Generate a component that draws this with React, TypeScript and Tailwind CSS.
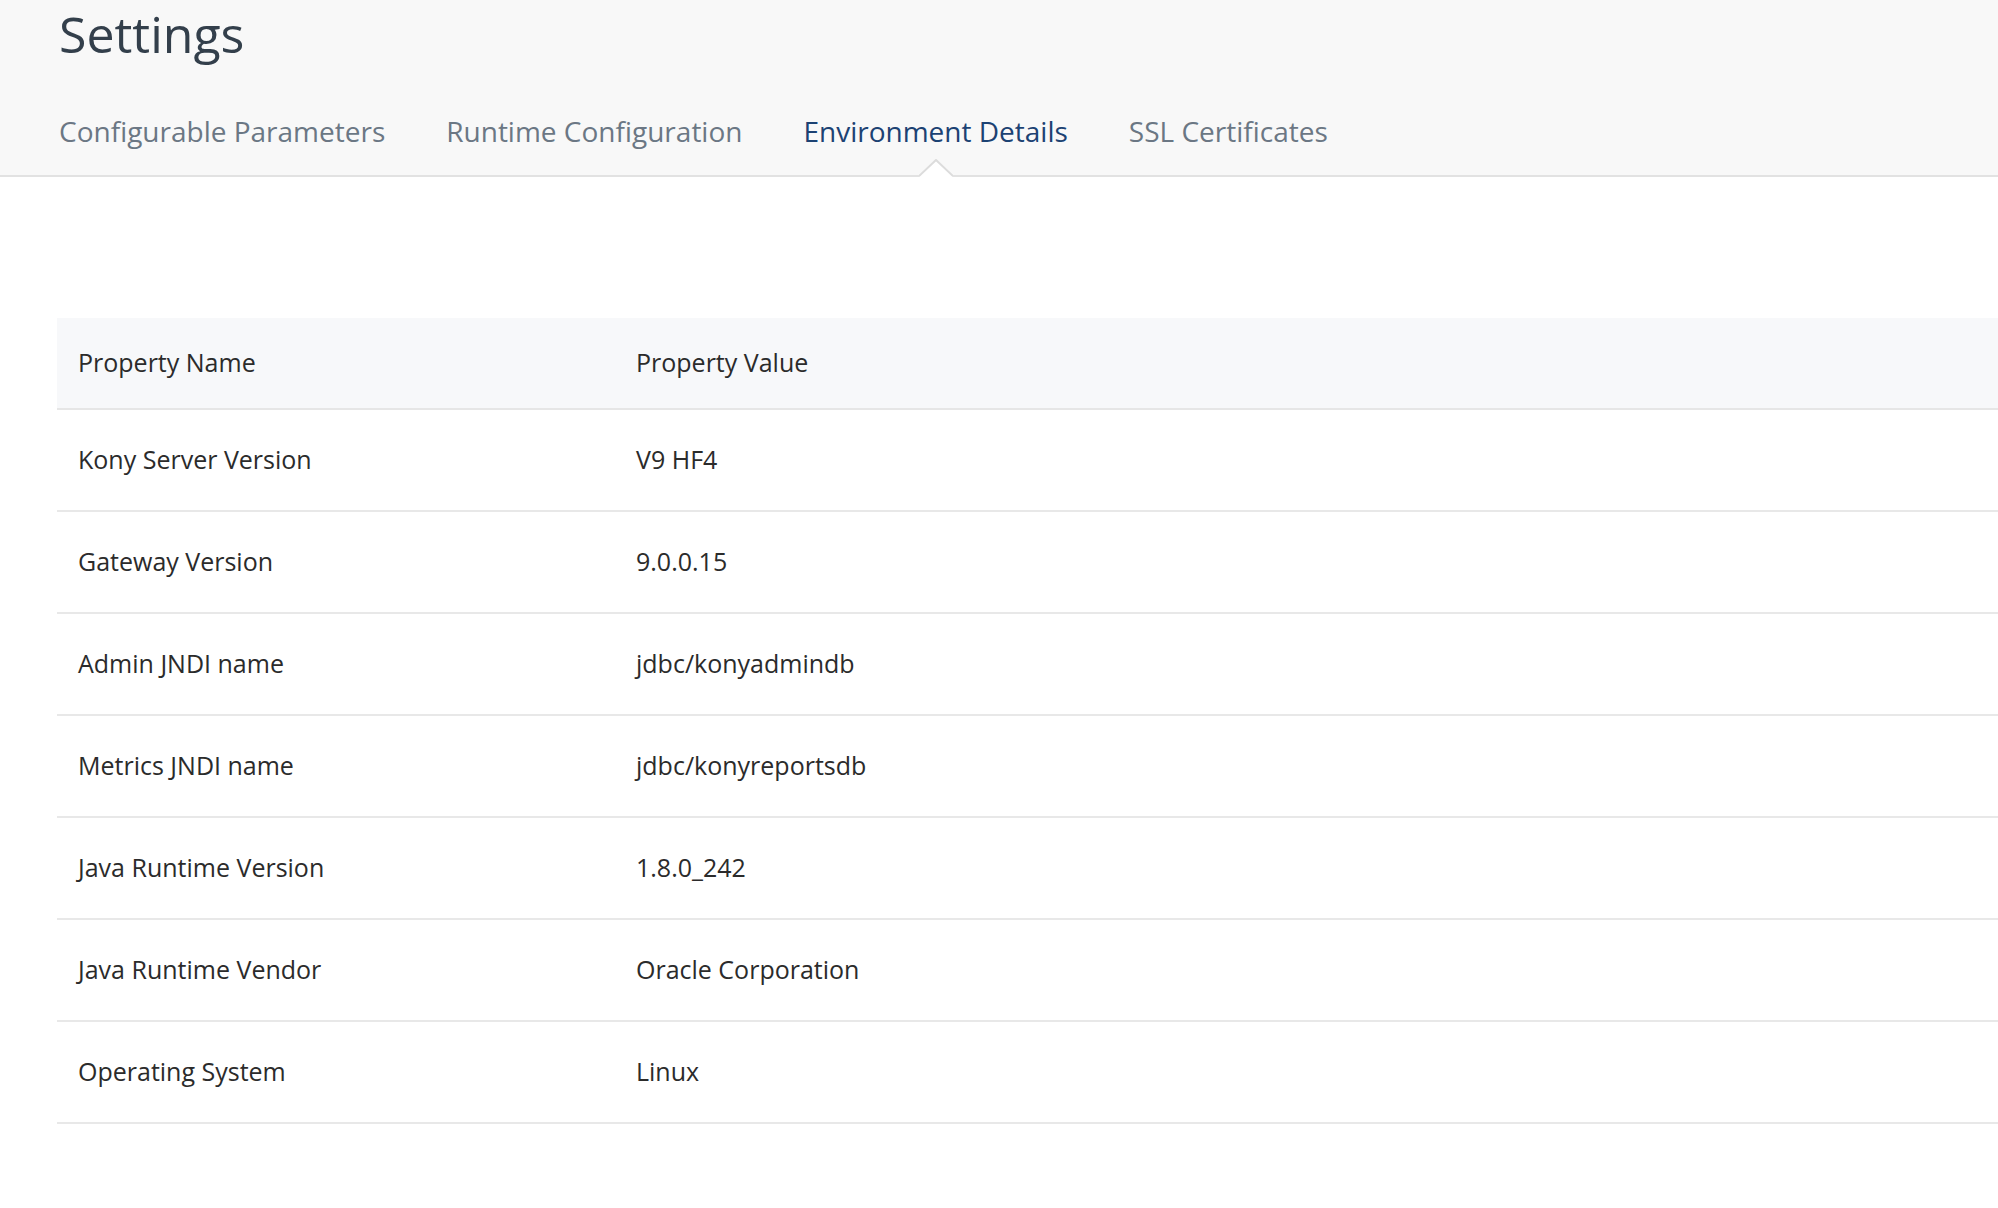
import { useState } from "react";

const TABS = [
  "Configurable Parameters",
  "Runtime Configuration",
  "Environment Details",
  "SSL Certificates",
];

const ROWS = [
  { name: "Kony Server Version", value: "V9 HF4" },
  { name: "Gateway Version", value: "9.0.0.15" },
  { name: "Admin JNDI name", value: "jdbc/konyadmindb" },
  { name: "Metrics JNDI name", value: "jdbc/konyreportsdb" },
  { name: "Java Runtime Version", value: "1.8.0_242" },
  { name: "Java Runtime Vendor", value: "Oracle Corporation" },
  { name: "Operating System", value: "Linux" },
];

export default function App() {
  const [active, setActive] = useState("Environment Details");

  return (
    <div className="min-h-[1208px] w-full bg-white font-['Open_Sans',sans-serif]">
      {/* Header */}
      <header className="bg-[#f8f8f8] border-b-2 border-[#e2e2e2] pl-[59px] pt-[4px]">
        <h1 className="h-[60px] text-[50px] leading-[60px] text-[#333f4b] font-normal">Settings</h1>

        {/* Tabs */}
        <nav className="mt-[47px] pb-[24px] flex gap-[61px]">
          {TABS.map((tab) => {
            const isActive = tab === active;
            return (
              <button
                key={tab}
                onClick={() => setActive(tab)}
                className={`relative h-[40px] text-[28px] leading-[40px] whitespace-nowrap cursor-pointer ${
                  isActive ? "text-[#1c4273]" : "text-[#6b7784]"
                }`}
              >
                {tab}
                {isActive && (
                  <svg
                    className="absolute left-1/2 -translate-x-1/2 top-[48px] w-[34px] h-[18px]"
                    viewBox="0 0 34 18"
                    fill="none"
                  >
                    <path d="M0 18L17 1L34 18Z" fill="#ffffff" />
                    <path d="M0 17L17 1L34 17" stroke="#dcdcdc" strokeWidth="2" />
                  </svg>
                )}
              </button>
            );
          })}
        </nav>
      </header>

      {/* Table */}
      <div className="ml-[57px] mt-[141px] text-[25px] text-[#2b2b2b]">
        <div className="grid grid-cols-[579px_1fr] items-center h-[92px] bg-[#f7f8fa] border-b-2 border-[#e6e6e6]">
          <div className="pl-[21px]">Property Name</div>
          <div>Property Value</div>
        </div>
        {ROWS.map((row) => (
          <div
            key={row.name}
            className="grid grid-cols-[579px_1fr] items-center h-[102px] border-b-2 border-[#e8e8e8]"
          >
            <div className="pl-[21px]">{row.name}</div>
            <div>{row.value}</div>
          </div>
        ))}
      </div>
    </div>
  );
}
